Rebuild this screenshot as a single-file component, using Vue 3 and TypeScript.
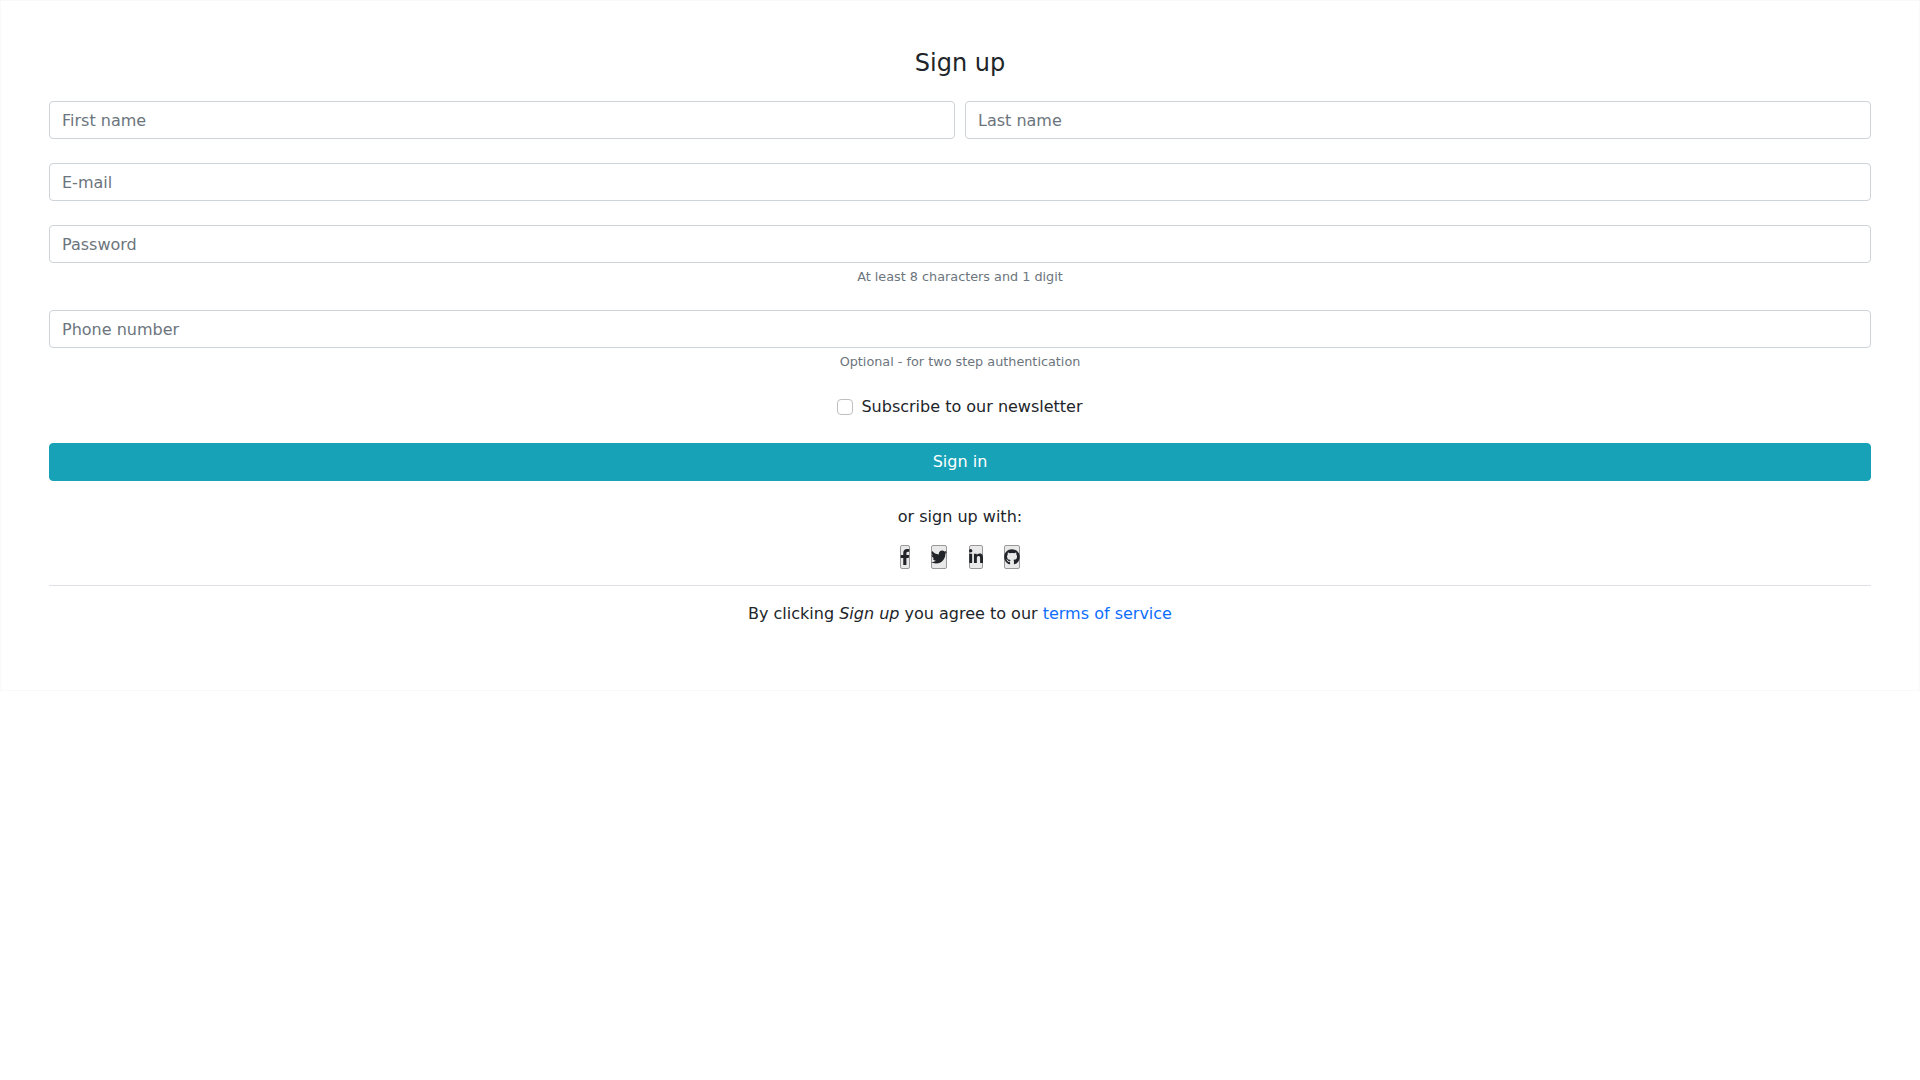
<script setup lang="ts">
import { ref } from 'vue'

const firstName = ref('')
const lastName = ref('')
const email = ref('')
const password = ref('')
const phone = ref('')
const newsletter = ref(false)
</script>

<template>
  <form class="signup" @submit.prevent>
    <p class="title">Sign up</p>

    <div class="row field">
      <input v-model="firstName" class="control" type="text" placeholder="First name" />
      <input v-model="lastName" class="control" type="text" placeholder="Last name" />
    </div>

    <input v-model="email" class="control field" type="email" placeholder="E-mail" />

    <div class="field">
      <input v-model="password" class="control" type="password" placeholder="Password" />
      <small class="hint">At least 8 characters and 1 digit</small>
    </div>

    <div class="field">
      <input v-model="phone" class="control" type="text" placeholder="Phone number" />
      <small class="hint">Optional - for two step authentication</small>
    </div>

    <label class="check">
      <input v-model="newsletter" type="checkbox" />
      <span>Subscribe to our newsletter</span>
    </label>

    <button class="submit" type="submit">Sign in</button>

    <p class="alt">or sign up with:</p>

    <div class="social">
      <button type="button" class="social-btn" aria-label="Facebook">
        <svg width="10" height="16" viewBox="0 0 320 512"><path d="M279.14 288l14.22-92.66h-88.91v-60.13c0-25.35 12.42-50.06 52.24-50.06h40.42V6.26S260.43 0 225.36 0c-73.22 0-121.08 44.38-121.08 124.72v70.62H22.89V288h81.39v224h100.17V288z" /></svg>
      </button>
      <button type="button" class="social-btn" aria-label="Twitter">
        <svg width="16" height="16" viewBox="0 0 512 512"><path d="M459.37 151.716c.325 4.548.325 9.097.325 13.645 0 138.72-105.583 298.558-298.558 298.558-59.452 0-114.68-17.219-161.137-47.106 8.447.974 16.568 1.299 25.34 1.299 49.055 0 94.213-16.568 130.274-44.832-46.132-.975-84.792-31.188-98.112-72.772 6.498.974 12.995 1.624 19.818 1.624 9.421 0 18.843-1.3 27.614-3.573-48.081-9.747-84.143-51.98-84.143-102.985v-1.299c13.969 7.797 30.214 12.67 47.431 13.319-28.264-18.843-46.781-51.005-46.781-87.391 0-19.492 5.197-37.36 14.294-52.954 51.655 63.675 129.3 105.258 216.365 109.807-1.624-7.797-2.599-15.918-2.599-24.04 0-57.828 46.782-104.934 104.934-104.934 30.213 0 57.502 12.67 76.67 33.137 23.715-4.548 46.456-13.32 66.599-25.34-7.798 24.366-24.366 44.833-46.132 57.827 21.117-2.273 41.584-8.122 60.426-16.243-14.292 20.791-32.161 39.308-52.628 54.253z" /></svg>
      </button>
      <button type="button" class="social-btn" aria-label="LinkedIn">
        <svg width="14" height="16" viewBox="0 0 448 512"><path d="M100.28 448H7.4V148.9h92.88zM53.79 108.1C24.09 108.1 0 83.5 0 53.8a53.79 53.79 0 0 1 107.58 0c0 29.7-24.1 54.3-53.79 54.3zM447.9 448h-92.68V302.4c0-34.7-.7-79.2-48.29-79.2-48.29 0-55.69 37.7-55.69 76.7V448h-92.78V148.9h89.08v40.8h1.3c12.4-23.5 42.69-48.3 87.88-48.3 94 0 111.28 61.9 111.28 142.3V448z" /></svg>
      </button>
      <button type="button" class="social-btn" aria-label="GitHub">
        <svg width="16" height="16" viewBox="0 0 496 512"><path d="M165.9 397.4c0 2-2.3 3.6-5.2 3.6-3.3 0-5.6-1.6-5.6-3.6 0-2 2.3-3.6 5.2-3.6 3-.3 5.6 1.3 5.6 3.6zm-31.1-4.5c-.7 2 1.3 4.3 4.3 4.9 2.6 1 5.6 0 6.2-2s-1.3-4.3-4.3-5.2c-2.6-.7-5.500.3-6.200 2.300zm44.200-1.700c-2.900.7-4.900 2.600-4.600 4.900.3 2 2.900 3.300 5.900 2.600 2.900-.7 4.900-2.600 4.600-4.600-.3-1.900-3-3.200-5.900-2.900zM244.800 8C106.100 8 0 113.300 0 252c0 110.900 69.800 205.800 169.500 239.200 12.800 2.300 17.300-5.600 17.300-12.100 0-6.200-.3-40.400-.3-61.400 0 0-70 15-84.700-29.800 0 0-11.400-29.100-27.800-36.600 0 0-22.900-15.700 1.600-15.400 0 0 24.900 2 38.600 25.800 21.900 38.600 58.600 27.500 72.900 20.900 2.300-16 8.800-27.100 16-33.700-55.900-6.200-112.300-14.300-112.300-110.500 0-27.500 7.600-41.300 23.600-58.900-2.600-6.500-11.100-33.300 2.600-67.900 20.900-6.500 69 27 69 27 20-5.600 41.500-8.500 62.800-8.500s42.800 2.900 62.800 8.500c0 0 48.100-33.600 69-27 13.700 34.700 5.200 61.400 2.600 67.900 16 17.700 25.800 31.500 25.800 58.900 0 96.500-58.900 104.200-114.800 110.500 9.200 7.900 17 22.900 17 46.400 0 33.700-.3 75.400-.3 83.600 0 6.500 4.600 14.400 17.300 12.100C428.200 457.800 496 362.900 496 252 496 113.300 383.500 8 244.800 8z" /></svg>
      </button>
    </div>

    <hr class="rule" />

    <p class="terms">By clicking <em>Sign up</em> you agree to our <a href="#">terms of service</a></p>
  </form>
</template>

<style scoped>
.signup {
  box-sizing: border-box;
  height: 691px;
  padding: 48px;
  border: 1px solid #f8f9fa;
  background: #fff;
  text-align: center;
  font-family: "DejaVu Sans", sans-serif;
  font-size: 16px;
  line-height: 1.5;
  color: #212529;
}

.title {
  margin: 0 0 24px;
  font-size: 24px;
  line-height: 28px;
}

.row {
  display: grid;
  grid-template-columns: 1fr 1fr;
  gap: 10px;
}

.field {
  margin-bottom: 24px;
}

.control {
  display: block;
  box-sizing: border-box;
  width: 100%;
  height: 38px;
  padding: 6px 12px;
  border: 1px solid #ced4da;
  border-radius: 4px;
  background: #fff;
  color: #495057;
  font: inherit;
}

.control::placeholder {
  color: #6c757d;
  opacity: 1;
}

.hint {
  display: block;
  margin-top: 4px;
  font-size: 12.8px;
  color: #6c757d;
}

.check {
  display: flex;
  justify-content: center;
  align-items: center;
  gap: 8px;
  margin-bottom: 24px;
}

.check input {
  appearance: none;
  box-sizing: border-box;
  width: 16px;
  height: 16px;
  margin: 0;
  border: 1px solid #bfbfbf;
  border-radius: 4px;
  background: #fff;
}

.check input:checked {
  border-color: #17a2b8;
  background: #17a2b8;
}

.submit {
  display: block;
  width: 100%;
  height: 38px;
  border: 1px solid #17a2b8;
  border-radius: 4px;
  background: #17a2b8;
  color: #fff;
  font: inherit;
  cursor: pointer;
}

.alt {
  margin: 24px 0 16px;
}

.social {
  display: flex;
  justify-content: center;
  gap: 21.5px;
}

.social-btn {
  display: flex;
  align-items: center;
  justify-content: center;
  height: 24px;
  padding: 0;
  border: 1px solid #999;
  border-radius: 2px;
  background: #e9e9e9;
}

.social-btn svg {
  display: block;
  margin: 0 -1px;
  fill: #212529;
}

.rule {
  margin: 16px 0;
  border: 0;
  border-top: 1px solid #dee2e6;
}

.terms {
  margin: 0;
}

.terms a {
  color: #0d6efd;
  text-decoration: none;
}
</style>
